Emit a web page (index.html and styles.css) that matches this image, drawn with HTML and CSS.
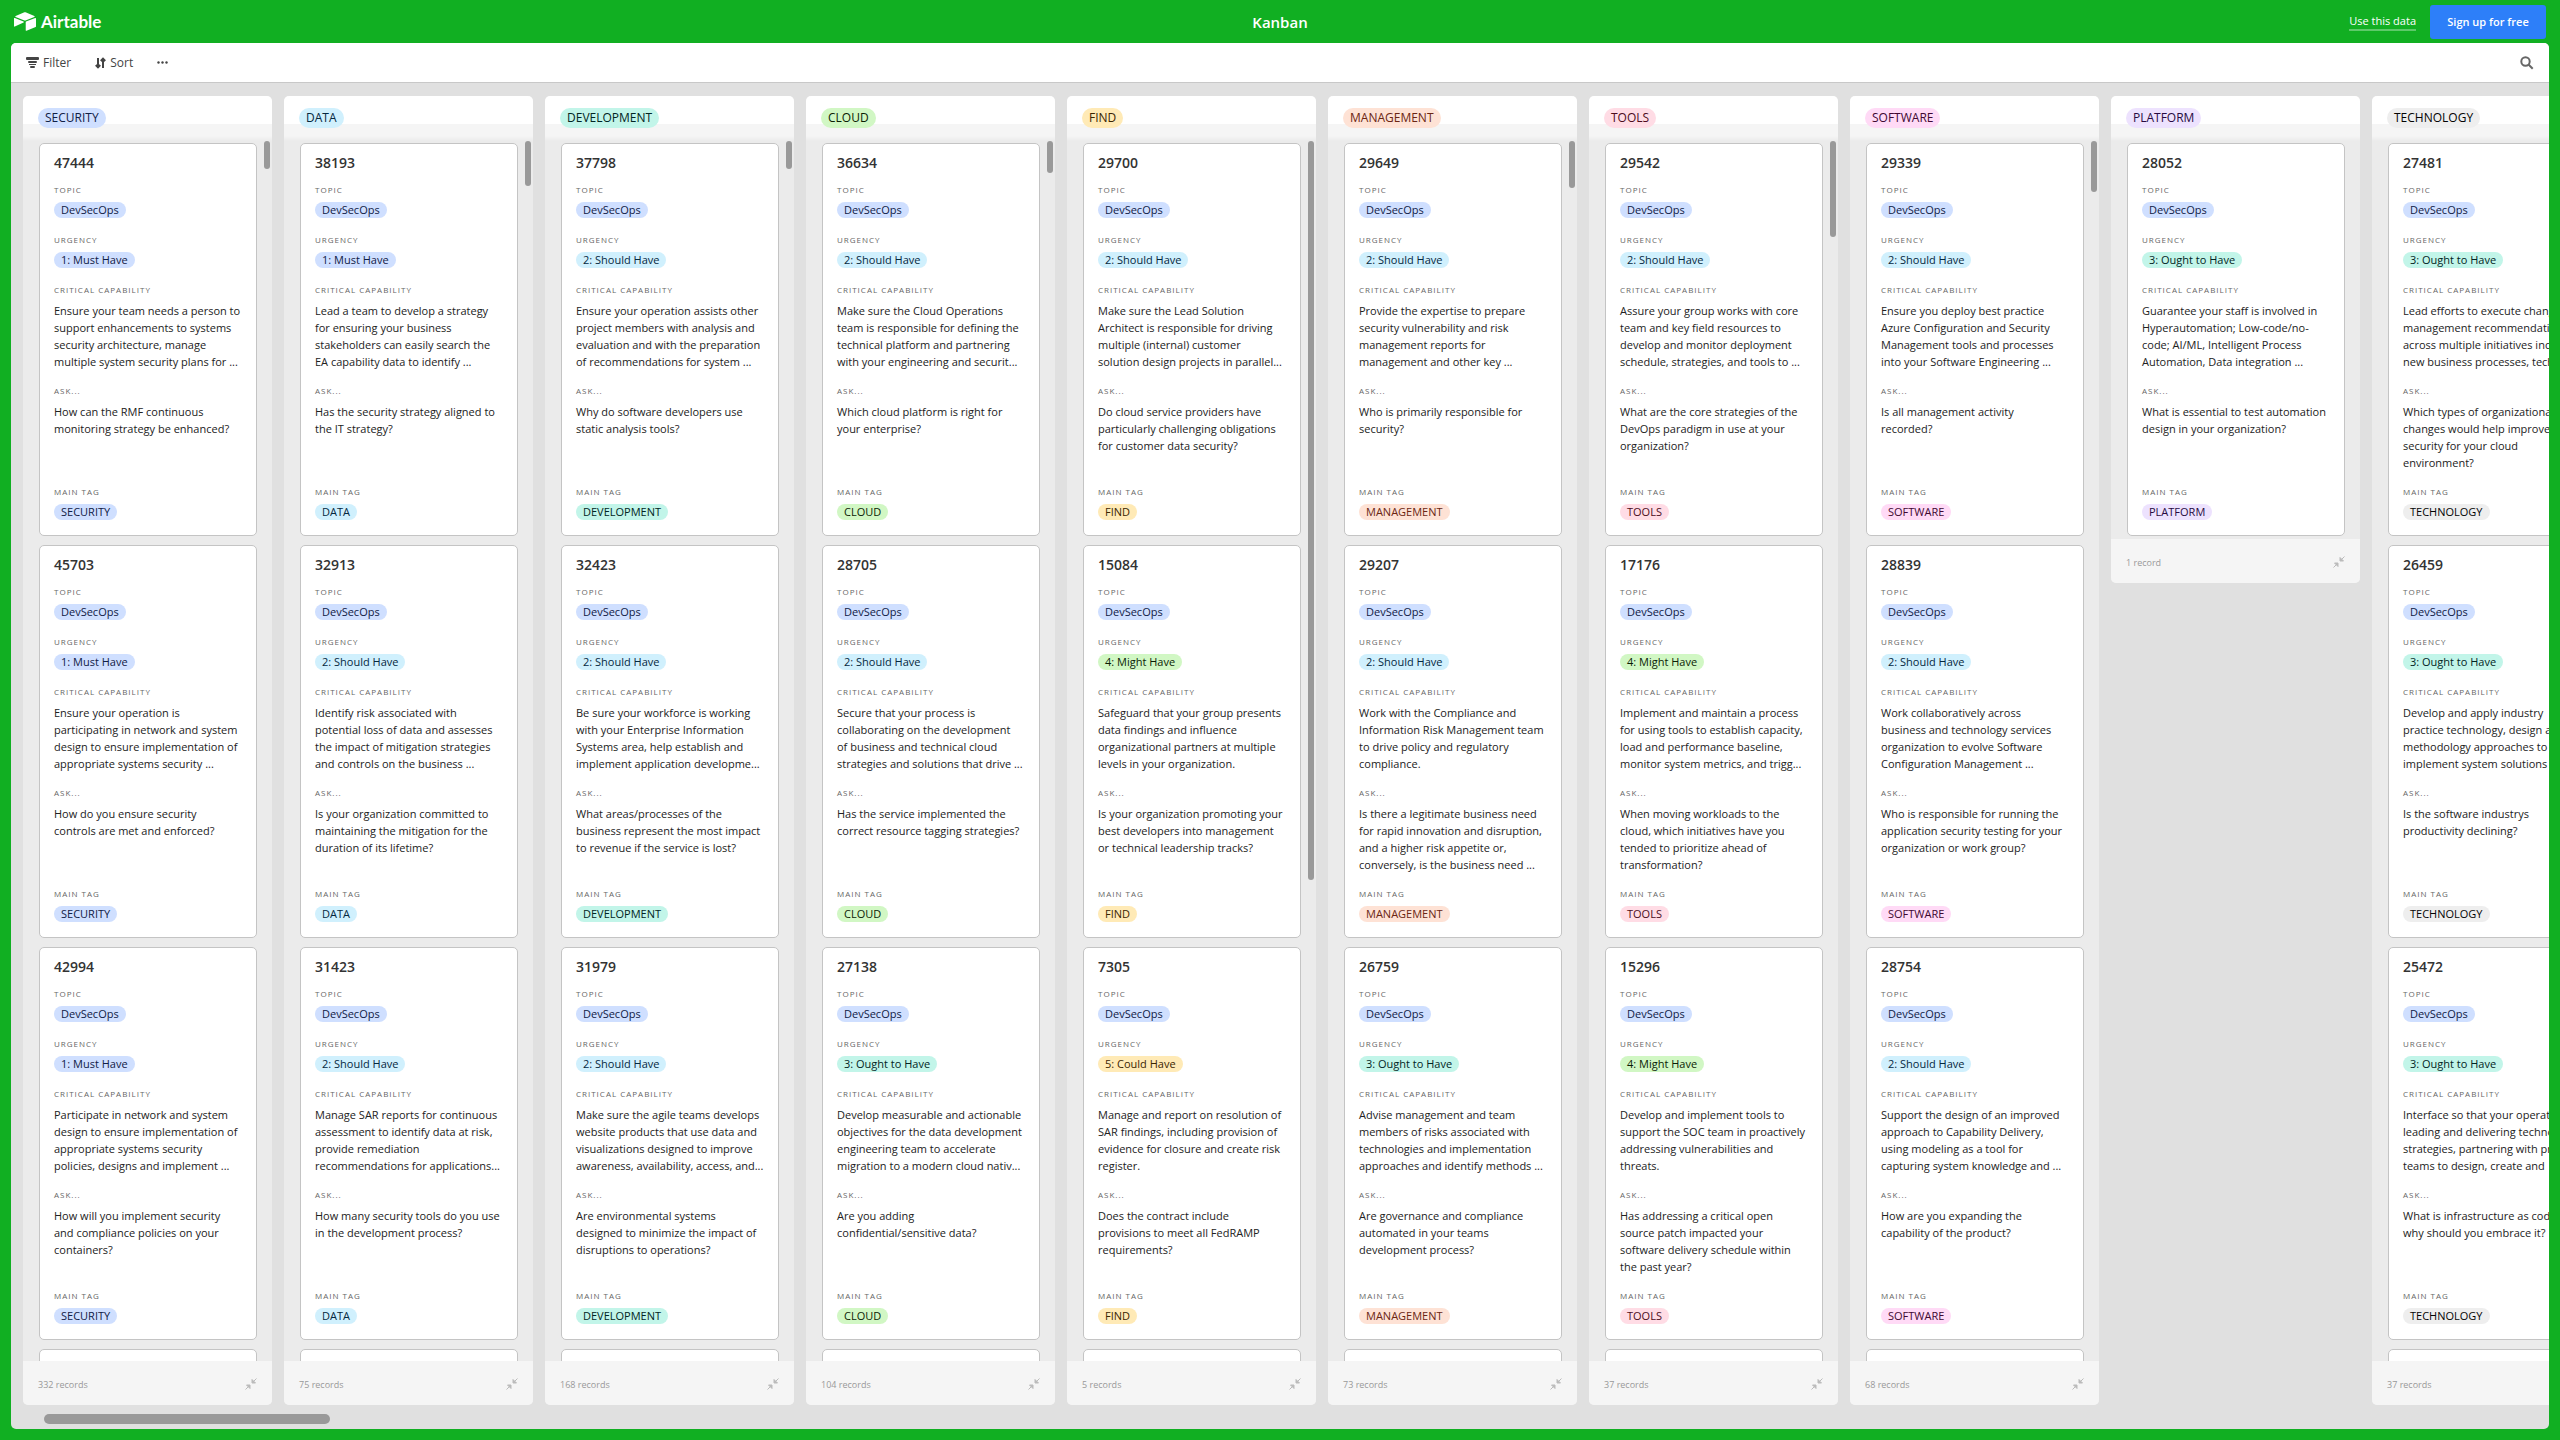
FILE: index.html
```html
<!DOCTYPE html>
<html lang="en">
<head>
<meta charset="utf-8">
<title>Kanban - Airtable</title>
<link rel="stylesheet" href="styles.css">
</head>
<body>
<header class="topbar">
  <a class="brand" href="#">
    <svg class="brand-mark" viewBox="11 10 177 149" aria-hidden="true">
      <path d="M90.04 12.37 24.08 39.66C20.41 41.18 20.45 46.39 24.14 47.85L90.38 74.12C96.2 76.43 102.68 76.43 108.5 74.12L174.73 47.85C178.42 46.39 178.46 41.18 174.79 39.66L108.83 12.37C102.82 9.88 96.06 9.88 90.04 12.37"/>
      <path d="M105.31 88.46V154.08C105.31 157.2 108.46 159.33 111.36 158.18L185.17 129.54C186.85 128.87 187.96 127.24 187.96 125.43V59.81C187.96 56.69 184.81 54.55 181.91 55.7L108.1 84.35C106.42 85.02 105.31 86.65 105.31 88.46"/>
      <path d="M88.08 91.85 66.17 102.42 17.71 125.65C14.78 127.07 11.04 124.93 11.04 121.67V60.09C11.04 58.91 11.65 57.89 12.46 57.13C14.2 55.5 16.26 55.45 17.6 55.98L87.71 83.76C91.27 85.17 91.55 90.17 88.08 91.85"/>
    </svg>
    <span class="brand-name">Airtable</span>
  </a>
  <h1 class="title">Kanban</h1>
  <nav class="actions">
    <a class="use-data" href="#">Use this data</a>
    <button class="signup" type="button">Sign up for free</button>
  </nav>
</header>
<main class="panel">
  <div class="toolbar">
    <button class="tool" type="button">
      <svg width="13" height="11" viewBox="0 0 13 11" aria-hidden="true"><rect y="0" width="13" height="3" rx="1"/><rect x="2" y="4" width="9" height="2" rx="1"/><rect x="3" y="7" width="7" height="1"/><rect x="4" y="9" width="5" height="2" rx="1"/></svg>
      Filter
    </button>
    <button class="tool" type="button">
      <svg class="line" width="11" height="12" viewBox="0 0 11 12" aria-hidden="true"><path d="M3 1v9M.8 8 3 10.3 5.200 8M8 11V2M5.800 4 8 1.700 10.200 4"/></svg>
      Sort
    </button>
    <button class="tool" type="button" aria-label="More">
      <svg width="11" height="3" viewBox="0 0 11 3" aria-hidden="true"><circle cx="1.500" cy="1.500" r="1.200"/><circle cx="5.500" cy="1.500" r="1.200"/><circle cx="9.500" cy="1.500" r="1.200"/></svg>
    </button>
    <button class="tool search" type="button" aria-label="Search">
      <svg width="14" height="14" viewBox="0 0 14 14" aria-hidden="true"><circle cx="5.500" cy="5.500" r="4.200"/><path d="m8.500 8.500 4.200 4.200"/></svg>
    </button>
  </div>
  <div class="board" id="board"></div>
</main>
<script src="board.js"></script>
</body>
</html>
```
FILE: styles.css
```css
* { box-sizing: border-box; }
body {
  margin: 0;
  height: 100vh;
  padding: 0 11px 11px;
  display: flex;
  flex-direction: column;
  overflow: hidden;
  background: #11af22;
  color: #222;
  font-family: "Open Sans", "Noto Sans", sans-serif;
  font-size: 11px;
}
h1, h2, h3, p, dl, dd { margin: 0; }
button { border: 0; background: none; font: inherit; color: inherit; padding: 0; }
a { color: inherit; text-decoration: none; }

.topbar {
  height: 43px;
  display: grid;
  grid-template-columns: 1fr auto 1fr;
  align-items: center;
  color: #fff;
}
.brand { display: flex; align-items: center; gap: 5px; padding-left: 3px; }
.brand-mark { width: 22px; height: 19px; fill: #fff; }
.brand-name { font: 700 17px/20px Lato, sans-serif; }
.title { font-size: 15px; font-weight: 600; line-height: 22px; }
.actions { display: flex; justify-content: flex-end; align-items: center; gap: 14px; padding-right: 3px; }
.use-data { font-size: 11px; line-height: 17px; border-bottom: 2px solid #5ec96a; }
.signup {
  width: 116px;
  height: 34px;
  border-radius: 3px;
  background: #2d7ff9;
  font-size: 11px;
  font-weight: 600;
}

.panel {
  flex: 1;
  min-height: 0;
  display: flex;
  flex-direction: column;
  border-radius: 5px;
  overflow: hidden;
  background: #e0e0e0;
}
.toolbar {
  flex: none;
  height: 40px;
  padding: 0 15px;
  display: flex;
  align-items: center;
  gap: 24px;
  background: #fff;
  border-bottom: 1px solid #c8c8c8;
}
.tool { display: flex; align-items: center; gap: 4px; font-size: 12px; color: #444; }
.tool svg { fill: #444; }
.tool .line { fill: none; stroke: #444; stroke-width: 2; }
.search { margin-left: auto; }
.search svg { fill: none; stroke: #666; stroke-width: 2; }

.board {
  position: relative;
  flex: 1;
  min-height: 0;
  display: flex;
  gap: 12px;
  padding: 13px 0 24px 12px;
  overflow: hidden;
}
.column {
  position: relative;
  flex: none;
  width: 249px;
  display: flex;
  flex-direction: column;
  border-radius: 5px;
  overflow: hidden;
  background: #ebebeb;
}
.column.short { align-self: flex-start; }
.column-head {
  flex: none;
  height: 45px;
  padding: 12px 15px 0;
  background: linear-gradient(#fff 28px, #f5f5f5 28px, #f5f5f5 40px, #ebebeb 45px);
}
.column-head .pill { padding: 0 7px; font-size: 12px; font-weight: 500; line-height: 20px; }
.cards {
  flex: 1;
  min-height: 0;
  padding: 2px 15px 3px 16px;
  display: flex;
  flex-direction: column;
  gap: 9px;
  overflow: hidden;
}
.card {
  flex: none;
  height: 393px;
  padding: 8px 14px 0;
  border: 1px solid #c4c4c4;
  border-radius: 5px;
  background: #fff;
}
.card h3 { margin-bottom: 9px; font-size: 14px; font-weight: 600; line-height: 22px; color: #333; }
.field { height: 50px; }
.field.long { height: 101px; }
.field dt { margin-bottom: 5px; font-size: 8px; line-height: 14px; letter-spacing: 1px; text-transform: uppercase; color: #666; }
.field dd { line-height: 17px; white-space: pre; }
.field .pill { line-height: 16px; }
.pill {
  display: block;
  width: fit-content;
  padding: 0 7px;
  border-radius: 10px;
  font-size: 11px;
  font-weight: 400;
}
.blue { background: #cfdfff; color: #102046; }
.cyan { background: #d0f0fd; color: #04283f; }
.teal { background: #c2f5e9; color: #012524; }
.green { background: #d1f7c4; color: #0b1d05; }
.yellow { background: #ffeab6; color: #3b2501; }
.orange { background: #fee2d5; color: #6b2613; }
.red { background: #ffdce5; color: #4c0c1c; }
.pink { background: #ffdaf6; color: #400832; }
.purple { background: #ede2fe; color: #280b42; }
.gray { background: #eee; color: #040404; }

.column-foot {
  flex: none;
  height: 44px;
  padding: 2px 15px 0;
  display: flex;
  align-items: center;
  justify-content: space-between;
  background: #f5f5f5;
  color: #999;
  font-size: 9px;
}
.column-foot svg { fill: #bbb; stroke: #bbb; }
.thumb { position: absolute; top: 45px; right: 2px; width: 6px; border-radius: 3px; background: #999; }
.thumb-x { position: absolute; left: 33px; bottom: 5px; width: 286px; height: 10px; border-radius: 5px; background: #999; }
```
FILE: board.js
```js
const urgencies = {
  1: ["1: Must Have", "blue"],
  2: ["2: Should Have", "cyan"],
  3: ["3: Ought to Have", "teal"],
  4: ["4: Might Have", "green"],
  5: ["5: Could Have", "yellow"]
};

// Column: name, colour, record count, scrollbar thumb height, cards [id, urgency, capability, ask]
const columns = [
  ["SECURITY", "blue", "332 records", 28, [
    ["47444", 1, "Ensure your team needs a person to\nsupport enhancements to systems\nsecurity architecture, manage\nmultiple system security plans for ...", "How can the RMF continuous\nmonitoring strategy be enhanced?"],
    ["45703", 1, "Ensure your operation is\nparticipating in network and system\ndesign to ensure implementation of\nappropriate systems security ...", "How do you ensure security\ncontrols are met and enforced?"],
    ["42994", 1, "Participate in network and system\ndesign to ensure implementation of\nappropriate systems security\npolicies, designs and implement ...", "How will you implement security\nand compliance policies on your\ncontainers?"]
  ]],
  ["DATA", "cyan", "75 records", 45, [
    ["38193", 1, "Lead a team to develop a strategy\nfor ensuring your business\nstakeholders can easily search the\nEA capability data to identify ...", "Has the security strategy aligned to\nthe IT strategy?"],
    ["32913", 2, "Identify risk associated with\npotential loss of data and assesses\nthe impact of mitigation strategies\nand controls on the business ...", "Is your organization committed to\nmaintaining the mitigation for the\nduration of its lifetime?"],
    ["31423", 2, "Manage SAR reports for continuous\nassessment to identify data at risk,\nprovide remediation\nrecommendations for applications...", "How many security tools do you use\nin the development process?"]
  ]],
  ["DEVELOPMENT", "teal", "168 records", 28, [
    ["37798", 2, "Ensure your operation assists other\nproject members with analysis and\nevaluation and with the preparation\nof recommendations for system ...", "Why do software developers use\nstatic analysis tools?"],
    ["32423", 2, "Be sure your workforce is working\nwith your Enterprise Information\nSystems area, help establish and\nimplement application developme...", "What areas/processes of the\nbusiness represent the most impact\nto revenue if the service is lost?"],
    ["31979", 2, "Make sure the agile teams develops\nwebsite products that use data and\nvisualizations designed to improve\nawareness, availability, access, and...", "Are environmental systems\ndesigned to minimize the impact of\ndisruptions to operations?"]
  ]],
  ["CLOUD", "green", "104 records", 32, [
    ["36634", 2, "Make sure the Cloud Operations\nteam is responsible for defining the\ntechnical platform and partnering\nwith your engineering and securit...", "Which cloud platform is right for\nyour enterprise?"],
    ["28705", 2, "Secure that your process is\ncollaborating on the development\nof business and technical cloud\nstrategies and solutions that drive ...", "Has the service implemented the\ncorrect resource tagging strategies?"],
    ["27138", 3, "Develop measurable and actionable\nobjectives for the data development\nengineering team to accelerate\nmigration to a modern cloud nativ...", "Are you adding\nconfidential/sensitive data?"]
  ]],
  ["FIND", "yellow", "5 records", 739, [
    ["29700", 2, "Make sure the Lead Solution\nArchitect is responsible for driving\nmultiple (internal) customer\nsolution design projects in parallel...", "Do cloud service providers have\nparticularly challenging obligations\nfor customer data security?"],
    ["15084", 4, "Safeguard that your group presents\ndata findings and influence\norganizational partners at multiple\nlevels in your organization.", "Is your organization promoting your\nbest developers into management\nor technical leadership tracks?"],
    ["7305", 5, "Manage and report on resolution of\nSAR findings, including provision of\nevidence for closure and create risk\nregister.", "Does the contract include\nprovisions to meet all FedRAMP\nrequirements?"]
  ]],
  ["MANAGEMENT", "orange", "73 records", 47, [
    ["29649", 2, "Provide the expertise to prepare\nsecurity vulnerability and risk\nmanagement reports for\nmanagement and other key ...", "Who is primarily responsible for\nsecurity?"],
    ["29207", 2, "Work with the Compliance and\nInformation Risk Management team\nto drive policy and regulatory\ncompliance.", "Is there a legitimate business need\nfor rapid innovation and disruption,\nand a higher risk appetite or,\nconversely, is the business need ..."],
    ["26759", 3, "Advise management and team\nmembers of risks associated with\ntechnologies and implementation\napproaches and identify methods ...", "Are governance and compliance\nautomated in your teams\ndevelopment process?"]
  ]],
  ["TOOLS", "red", "37 records", 96, [
    ["29542", 2, "Assure your group works with core\nteam and key field resources to\ndevelop and monitor deployment\nschedule, strategies, and tools to ...", "What are the core strategies of the\nDevOps paradigm in use at your\norganization?"],
    ["17176", 4, "Implement and maintain a process\nfor using tools to establish capacity,\nload and performance baseline,\nmonitor system metrics, and trigg...", "When moving workloads to the\ncloud, which initiatives have you\ntended to prioritize ahead of\ntransformation?"],
    ["15296", 4, "Develop and implement tools to\nsupport the SOC team in proactively\naddressing vulnerabilities and\nthreats.", "Has addressing a critical open\nsource patch impacted your\nsoftware delivery schedule within\nthe past year?"]
  ]],
  ["SOFTWARE", "pink", "68 records", 51, [
    ["29339", 2, "Ensure you deploy best practice\nAzure Configuration and Security\nManagement tools and processes\ninto your Software Engineering ...", "Is all management activity\nrecorded?"],
    ["28839", 2, "Work collaboratively across\nbusiness and technology services\norganization to evolve Software\nConfiguration Management ...", "Who is responsible for running the\napplication security testing for your\norganization or work group?"],
    ["28754", 2, "Support the design of an improved\napproach to Capability Delivery,\nusing modeling as a tool for\ncapturing system knowledge and ...", "How are you expanding the\ncapability of the product?"]
  ]],
  ["PLATFORM", "purple", "1 record", 0, [
    ["28052", 3, "Guarantee your staff is involved in\nHyperautomation; Low-code/no-\ncode; AI/ML, Intelligent Process\nAutomation, Data integration ...", "What is essential to test automation\ndesign in your organization?"]
  ]],
  ["TECHNOLOGY", "gray", "37 records", 0, [
    ["27481", 3, "Lead efforts to execute change\nmanagement recommendations\nacross multiple initiatives including\nnew business processes, technology", "Which types of organizational\nchanges would help improve\nsecurity for your cloud\nenvironment?"],
    ["26459", 3, "Develop and apply industry\npractice technology, design and\nmethodology approaches to\nimplement system solutions", "Is the software industrys\nproductivity declining?"],
    ["25472", 3, "Interface so that your operation\nleading and delivering technology\nstrategies, partnering with product\nteams to design, create and", "What is infrastructure as code\nwhy should you embrace it?"]
  ]]
];

const pill = (text, color) => `<span class="pill ${color}">${text}</span>`;
const field = (label, value, long) =>
  `<div class="field${long ? " long" : ""}"><dt>${label}</dt><dd>${value}</dd></div>`;

const card = (name, color, [id, urgency, capability, ask]) => `
  <article class="card">
    <h3>${id}</h3>
    <dl>
      ${field("Topic", pill("DevSecOps", "blue"))}
      ${field("Urgency", pill(...urgencies[urgency]))}
      ${field("Critical capability", capability, true)}
      ${field("Ask...", ask, true)}
      ${field("Main tag", pill(name, color))}
    </dl>
  </article>`;

const column = ([name, color, count, thumb, cards]) => `
  <section class="column${cards.length === 1 ? " short" : ""}">
    <header class="column-head"><h2 class="pill ${color}">${name}</h2></header>
    <div class="cards">
      ${cards.map(c => card(name, color, c)).join("")}
      ${cards.length > 1 ? '<article class="card"></article>' : ""}
    </div>
    <footer class="column-foot">
      <span>${count}</span>
      <svg width="12" height="12" viewBox="0 0 12 12" aria-hidden="true"><path d="M7 1.500V5h3.500zM1.500 7H5v3.500z"/><path d="M8 4l3.500-3.500M4 8 .500 11.500" stroke-width="1"/></svg>
    </footer>
    ${thumb ? `<div class="thumb" style="height:${thumb}px"></div>` : ""}
  </section>`;

document.getElementById("board").innerHTML =
  columns.map(column).join("") + '<div class="thumb-x"></div>';
```
